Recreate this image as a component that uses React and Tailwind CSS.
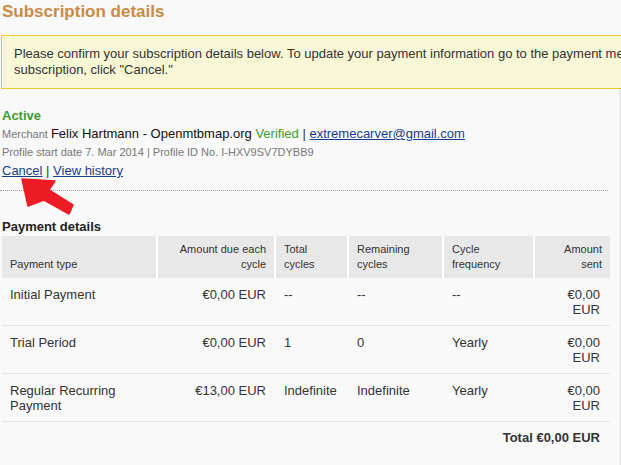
const ROWS = [
  { type: "Initial Payment", due: "€0,00 EUR", total: "--", remaining: "--", freq: "--", sent: "€0,00 EUR" },
  { type: "Trial Period", due: "€0,00 EUR", total: "1", remaining: "0", freq: "Yearly", sent: "€0,00 EUR" },
  { type: "Regular Recurring Payment", due: "€13,00 EUR", total: "Indefinite", remaining: "Indefinite", freq: "Yearly", sent: "€0,00 EUR" },
];

const HEAD = "align-bottom pt-[6px] pb-[6px] pl-2 pr-2 font-normal text-[11px] leading-[15px] text-[#333]";

export default function App() {
  return (
    <div className="relative w-[621px] h-[465px] overflow-hidden bg-[#f9f9f9] font-['Liberation_Sans',Arial,sans-serif] text-[#222]">
      <h1 className="pt-[2px] pl-[2px] text-[17px] leading-[19px] font-bold text-[#c98a45]">Subscription details</h1>

      <div className="mt-[14px] ml-[1px] w-[900px] border border-[#f2c530] bg-[#f8f7d6] pl-3 pt-[10px] pb-[10px] text-[13px] leading-[16px] text-[#333] whitespace-nowrap">
        Please confirm your subscription details below. To update your payment information go to the payment methods page. To cancel this
        <br />
        subscription, click "Cancel."
      </div>

      <div className="w-[621px] h-[400px] border-r-2 border-[#e9e9e9]">
        <div className="pl-[2px] pt-[18px]">
          <div className="text-[13px] leading-[18px] font-bold text-[#3e9c35]">Active</div>
          <div className="text-[13px] leading-[18px] whitespace-nowrap">
            <span className="text-[11px] text-[#777]">Merchant </span>
            <span className="text-[#111]">Felix Hartmann - Openmtbmap.org</span>{" "}
            <span className="text-[#3e9c35]">Verified</span>{" "}
            <span className="text-[#333]">|</span>{" "}
            <a className="underline text-[#173d8f]">extremecarver@gmail.com</a>
          </div>
          <div className="text-[11px] leading-[19px] text-[#777]">
            Profile start date 7. Mar 2014 | Profile ID No. I-HXV9SV7DYBB9
          </div>
          <div className="text-[13px] leading-[18px] text-[#333]">
            <a className="underline text-[#173d8f]">Cancel</a> | <a className="underline text-[#173d8f]">View history</a>
          </div>
        </div>

        <div className="mt-[10px] w-[608px] border-t border-dotted border-[#9a9a9a]" />

        <h2 className="mt-[28px] mb-[2px] pl-[2px] text-[13px] leading-[15px] font-bold text-[#222]">Payment details</h2>

        <table className="ml-[2px] w-[608px] table-fixed border-separate border-spacing-0 text-[13px] leading-[15px]">
          <colgroup>
            <col className="w-[156px]" />
            <col className="w-[118px]" />
            <col className="w-[73px]" />
            <col className="w-[95px]" />
            <col className="w-[91px]" />
            <col className="w-[75px]" />
          </colgroup>
          <thead>
            <tr className="bg-[#e8e8e8]">
              <th className={`${HEAD} text-left border-r-2 border-white`}>Payment type</th>
              <th className={`${HEAD} text-right border-r-2 border-white`}>Amount due each cycle</th>
              <th className={`${HEAD} text-left border-r-2 border-white`}>Total cycles</th>
              <th className={`${HEAD} text-left border-r-2 border-white`}>Remaining cycles</th>
              <th className={`${HEAD} text-left border-r-2 border-white`}>Cycle frequency</th>
              <th className={`${HEAD} text-right`}>Amount sent</th>
            </tr>
          </thead>
          <tbody>
            {ROWS.map((r, i) => (
              <tr key={i} className="align-top text-[#333]">
                <td className="pt-[9px] pb-[8px] pl-2 pr-2 border-b border-[#e4e4e4]">{r.type}</td>
                <td className="pt-[9px] pb-[8px] pl-2 pr-[10px] text-right border-b border-[#e4e4e4]">{r.due}</td>
                <td className="pt-[9px] pb-[8px] pl-2 pr-2 border-b border-[#e4e4e4]">{r.total}</td>
                <td className="pt-[9px] pb-[8px] pl-2 pr-2 border-b border-[#e4e4e4]">{r.remaining}</td>
                <td className="pt-[9px] pb-[8px] pl-2 pr-2 border-b border-[#e4e4e4]">{r.freq}</td>
                <td className="pt-[9px] pb-[8px] pl-2 pr-[10px] text-right border-b border-[#e4e4e4]">{r.sent}</td>
              </tr>
            ))}
          </tbody>
        </table>

        <div className="w-[610px] pt-2 pr-[10px] text-right text-[13px] leading-[15px] font-bold text-[#333]">
          Total €0,00 EUR
        </div>
      </div>

      {/* red annotation arrow */}
      <svg className="absolute left-0 top-0 pointer-events-none" width="621" height="465" viewBox="0 0 621 465">
        <polygon
          points="22,179 55,181 49,190 73,205 69,214 44,200 28,206"
          fill="#ed1c24"
          stroke="#ed1c24"
          strokeWidth="1.5"
          strokeLinejoin="round"
        />
      </svg>
    </div>
  );
}
